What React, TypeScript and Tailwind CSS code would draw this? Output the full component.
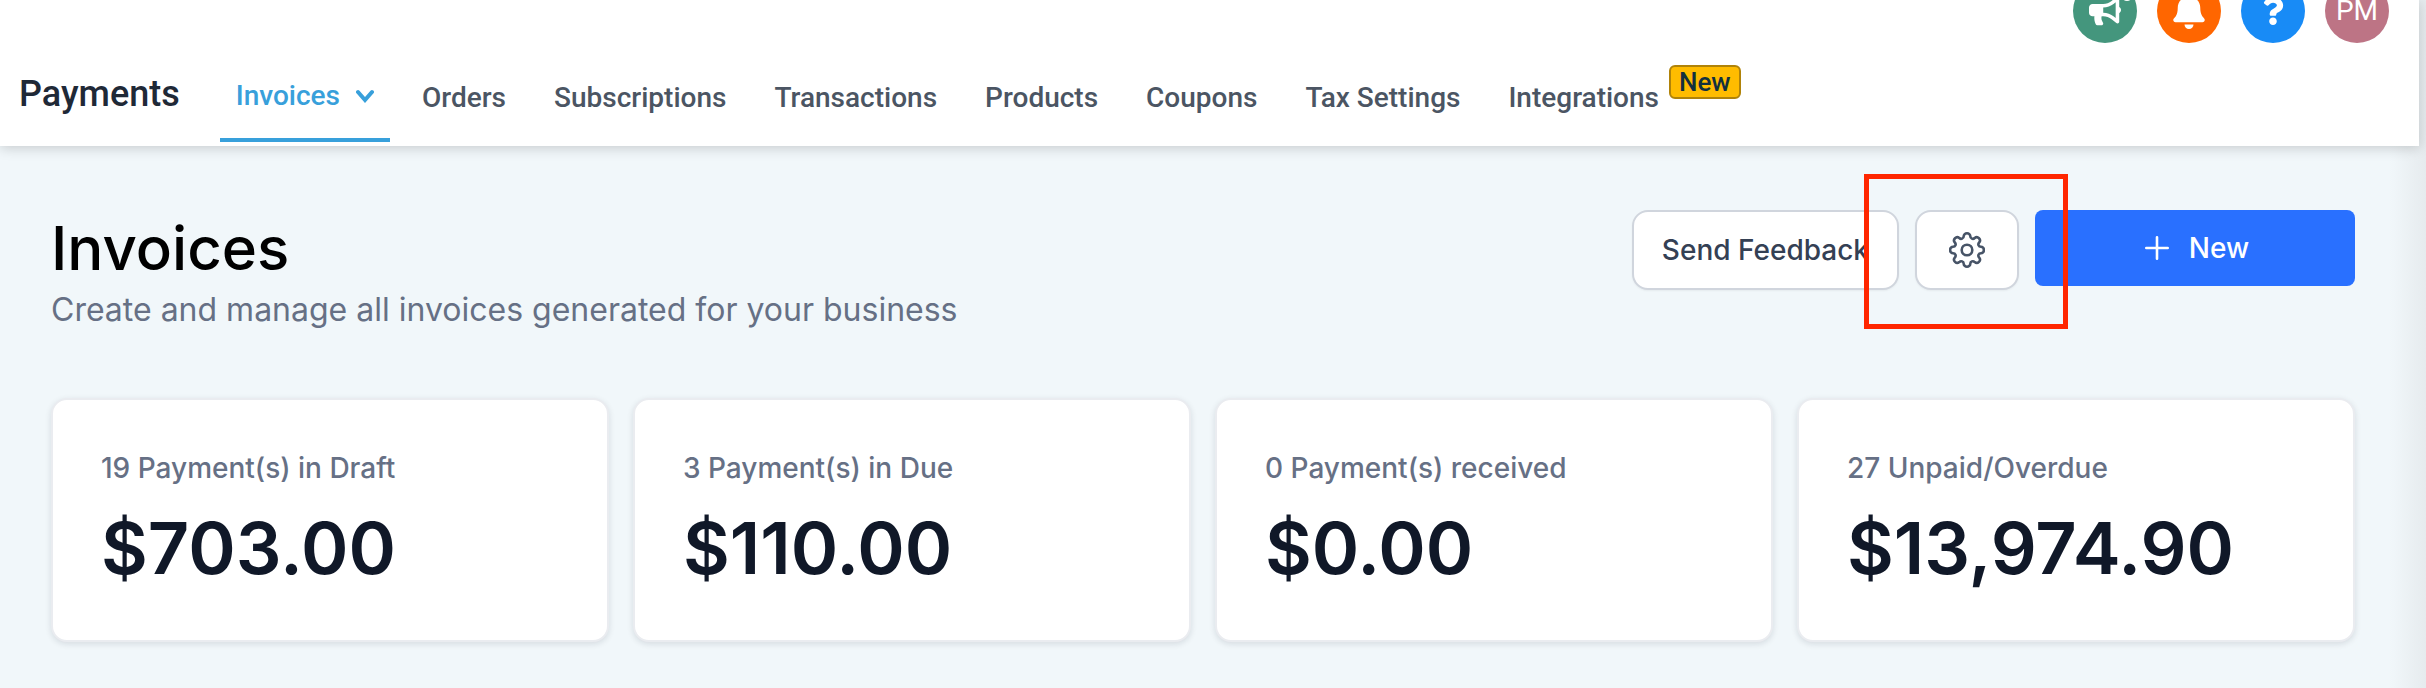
import type { ReactNode } from "react";
import { FaBell, FaBullhorn, FaQuestion } from "react-icons/fa";

const tabs = [
  "Orders",
  "Subscriptions",
  "Transactions",
  "Products",
  "Coupons",
  "Tax Settings",
  "Integrations",
];

const stats = [
  { label: "19 Payment(s) in Draft", value: "$703.00" },
  { label: "3 Payment(s) in Due", value: "$110.00" },
  { label: "0 Payment(s) received", value: "$0.00" },
  { label: "27 Unpaid/Overdue", value: "$13,974.90" },
];

function RoundButton({
  label,
  className,
  children,
}: {
  label: string;
  className: string;
  children: ReactNode;
}) {
  return (
    <button
      type="button"
      aria-label={label}
      className={`relative flex size-16 items-center justify-center rounded-full text-white ${className}`}
    >
      {children}
    </button>
  );
}

function GearIcon() {
  return (
    <svg
      viewBox="0 0 36 36"
      className="size-9"
      fill="none"
      stroke="currentColor"
      strokeWidth="2.6"
      strokeLinejoin="round"
    >
      <circle cx="18" cy="18" r="5.3" />
      <path d="M14.7 4.3a3.3 3 0 0 1 6.6 0c0 2.3 2.7 3.4 4.4 1.7a3.2 3.2 0 0 1 4.5 4.5c-1.7 1.7-.6 4.2 1.7 4.2a3 3.3 0 0 1 0 6.6c-2.3 0-3.4 2.6-1.7 4.3a3.2 3.2 0 0 1-4.5 4.5c-1.7-1.7-4.4-.7-4.4 1.6a3.3 3 0 0 1-6.6 0c0-2.3-2.7-3.3-4.4-1.6a3.2 3.2 0 0 1-4.5-4.5c1.7-1.7.6-4.3-1.7-4.3a3 3.3 0 0 1 0-6.6c2.3 0 3.4-2.5 1.7-4.2a3.2 3.2 0 0 1 4.5-4.5c1.7 1.7 4.4.6 4.4-1.7z" />
    </svg>
  );
}

function Header() {
  return (
    <header className="relative z-10 mr-[7px] flex h-[146px] flex-col justify-between bg-white shadow-[0_2px_12px_rgba(0,0,0,0.18)]">
      {/* Account shortcuts, cut off by the top of the viewport */}
      <div className="-mt-[21px] -mb-16 flex h-16 justify-end gap-5 pr-[30px]">
        <RoundButton label="Announcements" className="bg-[#44967d]">
          <FaBullhorn className="size-8" />
          <span className="absolute top-[10px] right-1 size-3 rounded-full bg-white" />
        </RoundButton>
        <RoundButton label="Notifications" className="bg-[#ff6600]">
          <FaBell className="size-9" />
        </RoundButton>
        <RoundButton label="Help" className="bg-[#188bf6]">
          <FaQuestion className="size-7" />
        </RoundButton>
        <RoundButton label="Profile" className="bg-[#bd7485]">
          <span className="text-[28px] leading-5">PM</span>
        </RoundButton>
      </div>
      <nav className="mb-1 flex h-[88px] items-center pl-[19px]">
        <span className="pb-2 text-4xl font-medium text-[#1f2937]">
          Payments
        </span>
        <a
          href="#invoices"
          className="ml-10 flex h-full items-center gap-4 border-b-4 border-[#38a0db] px-4 text-[28px] font-medium text-[#38a0db]"
        >
          Invoices
          <svg
            viewBox="0 0 18 14"
            className="h-[14px] w-[18px]"
            fill="none"
            stroke="currentColor"
            strokeWidth="4"
            strokeLinecap="round"
          >
            <path d="M2 3l7 8 7-8" />
          </svg>
        </a>
        <div className="ml-8 flex items-center gap-12 text-[28px] font-medium text-[#4b5563]">
          {tabs.map((tab) => (
            <a key={tab} href="#">
              {tab}
            </a>
          ))}
        </div>
        <span className="mb-8 ml-[10px] rounded-md border-2 border-[#b08309] bg-[#ffbc00] px-2 text-[26px] leading-[30px] font-medium text-[#12303f]">
          New
        </span>
      </nav>
    </header>
  );
}

export default function App() {
  return (
    <div className="relative min-h-screen overflow-hidden bg-[#f1f7fa] font-[Roboto,sans-serif]">
      <Header />
      <div className="absolute inset-y-0 right-0 w-9 bg-linear-to-l from-[#e6ebee] to-transparent" />

      <main className="pt-16 pr-[71px] pb-11 pl-[51px] font-[Inter,sans-serif]">
        <div className="flex items-start justify-between">
          <div>
            <h1 className="text-6xl leading-[76px] font-medium text-black">
              Invoices
            </h1>
            <p className="mt-1 text-[32px] leading-[40px] text-[#667085]">
              Create and manage all invoices generated for your business
            </p>
          </div>
          <div className="flex items-start gap-4">
            <button
              type="button"
              className="h-20 rounded-2xl border-2 border-[#d0d5dd] bg-white px-7 text-[28px] font-medium text-[#344054] shadow-xs"
            >
              Send Feedback
            </button>
            <div className="relative">
              <button
                type="button"
                aria-label="Settings"
                className="flex h-20 w-[104px] items-center justify-center rounded-2xl border-2 border-[#d0d5dd] bg-white text-[#475467] shadow-xs"
              >
                <GearIcon />
              </button>
              {/* Callout frame around the settings button */}
              <div className="pointer-events-none absolute -top-9 -right-[49px] -bottom-[39px] -left-[51px] z-10 border-5 border-[#ff2600]" />
            </div>
            <button
              type="button"
              className="flex h-[76px] w-80 items-center justify-center gap-5 rounded-lg bg-[#2970ff] pl-1 text-[28px] font-medium text-white"
            >
              <svg
                viewBox="0 0 24 24"
                className="size-6"
                fill="none"
                stroke="currentColor"
                strokeWidth="2.6"
                strokeLinecap="round"
              >
                <path d="M12 1.3v21.4M1.3 12h21.4" />
              </svg>
              New
            </button>
          </div>
        </div>

        <section className="mt-[68px] grid grid-cols-4 gap-6">
          {stats.map((stat) => (
            <div
              key={stat.label}
              className="rounded-2xl border-2 border-[#eaecf0] bg-white p-12 shadow-[0_2px_6px_rgba(16,24,40,0.12)]"
            >
              <p className="text-[28px] leading-[40px] font-medium text-[#667085]">
                {stat.label}
              </p>
              <p className="mt-4 text-7xl leading-[88px] font-semibold text-[#101828]">
                {stat.value}
              </p>
            </div>
          ))}
        </section>
      </main>
    </div>
  );
}
